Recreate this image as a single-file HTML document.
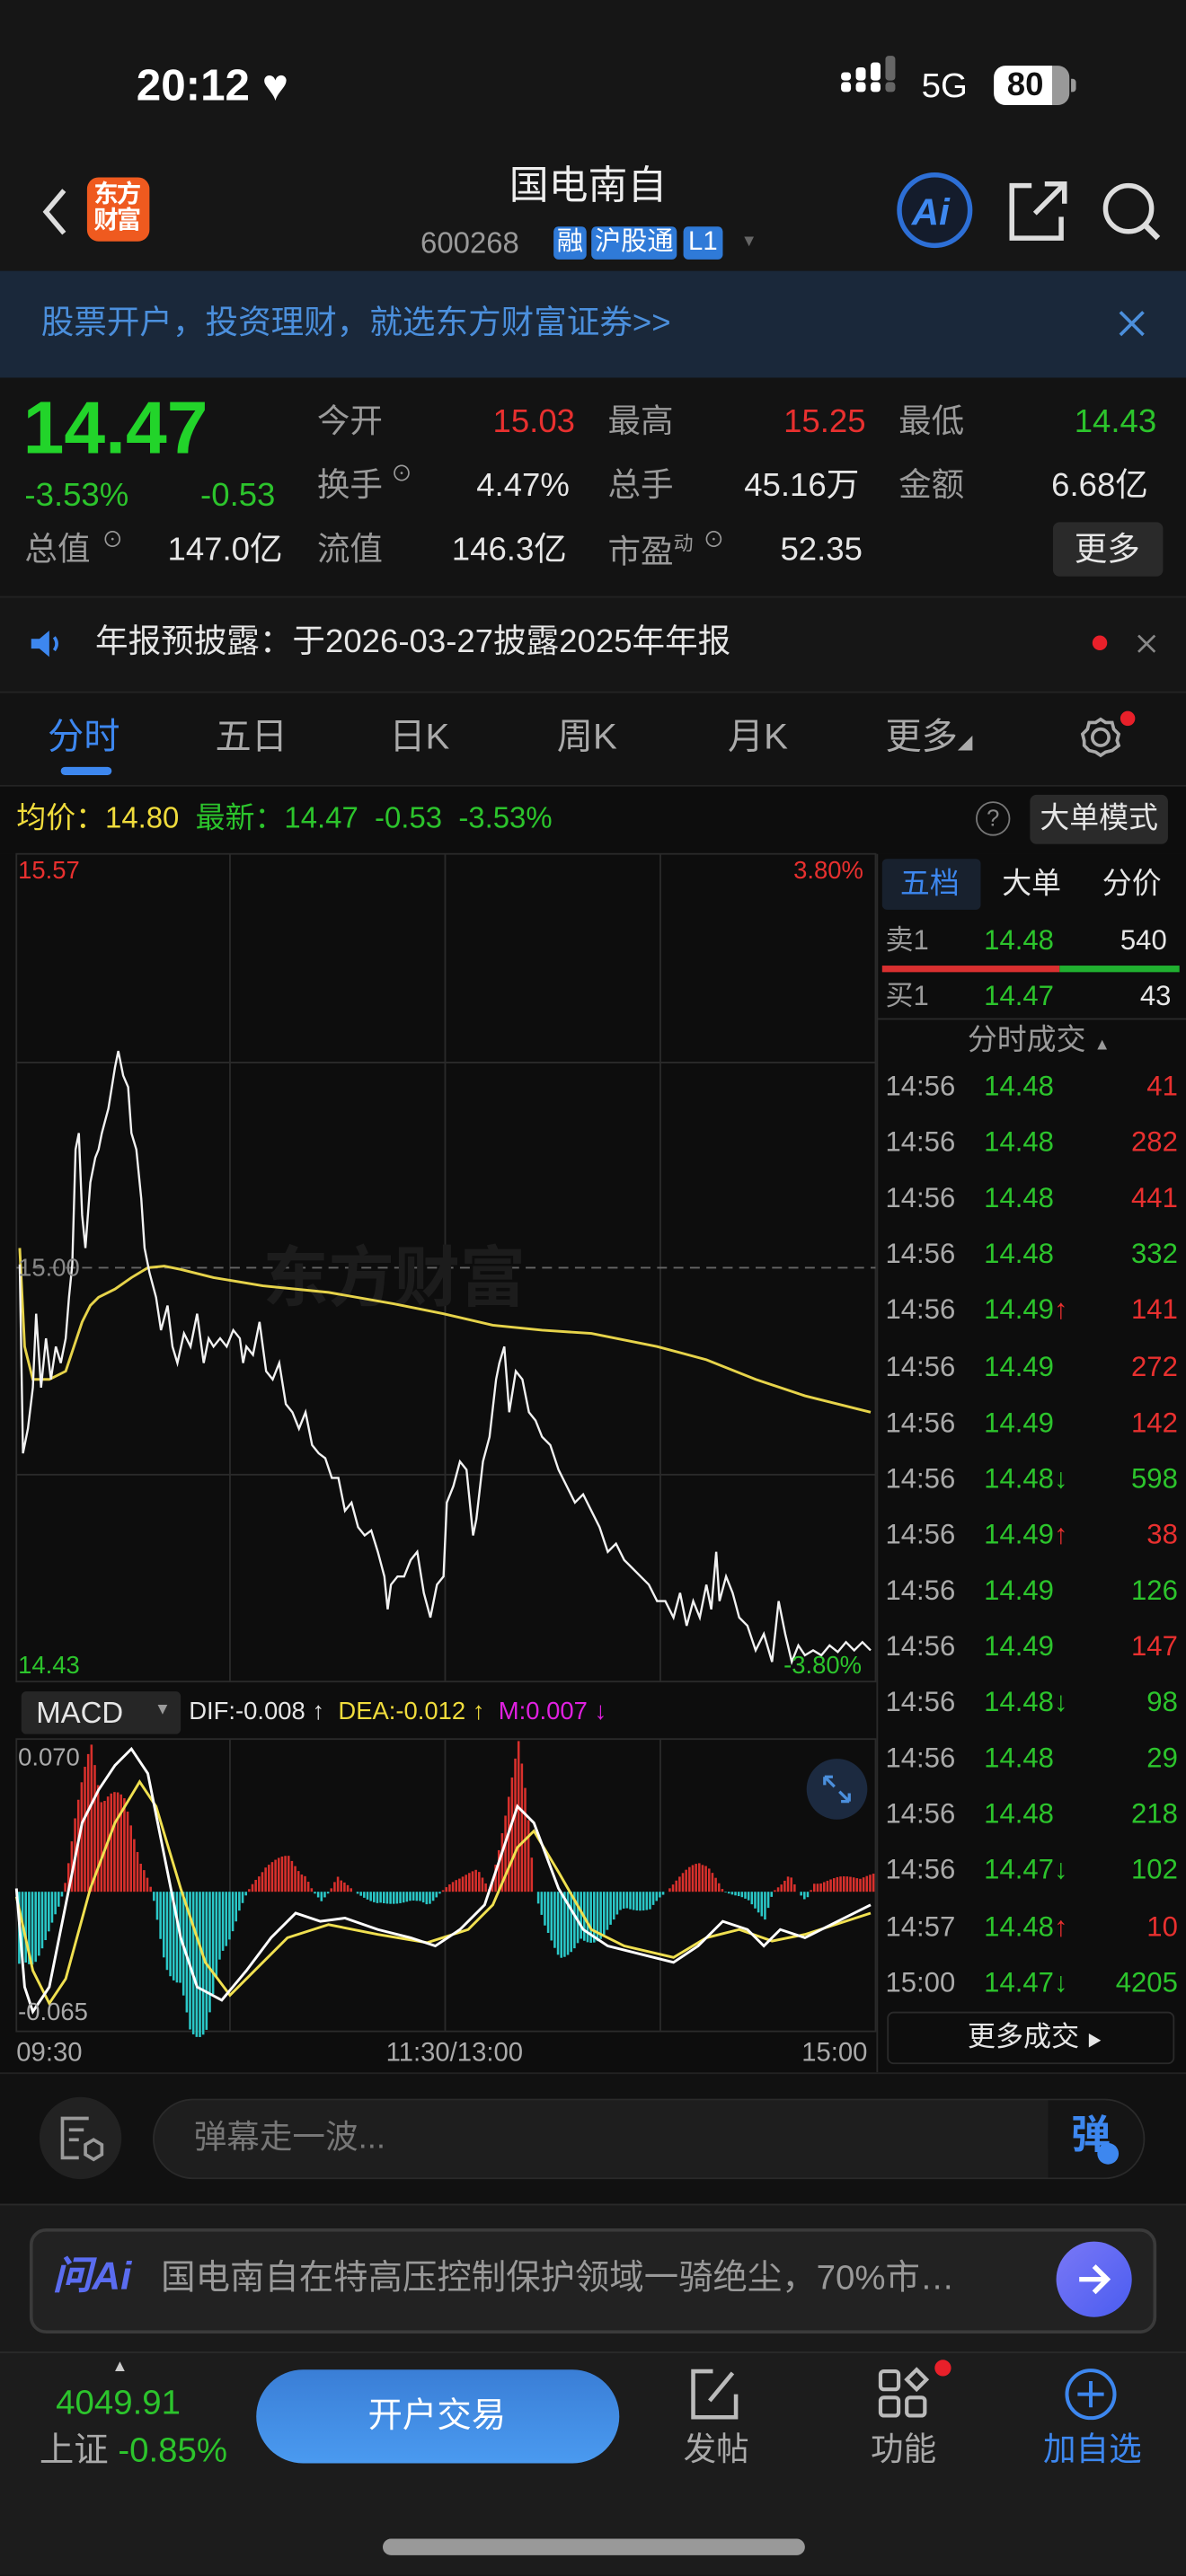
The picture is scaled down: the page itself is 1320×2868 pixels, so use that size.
<!DOCTYPE html>
<html><head><meta charset="utf-8">
<style>
*{margin:0;padding:0;box-sizing:border-box}
html,body{width:1320px;height:2868px;background:#161616;overflow:hidden}
#w{position:absolute;left:0;top:0;width:722px;height:1568px;transform:scale(1.8283);transform-origin:0 0;background:#161616;font-family:"Liberation Sans","Noto Sans CJK SC",sans-serif;color:#ddd}
.a{position:absolute;white-space:nowrap;line-height:1}
.g{color:#2cc42c}.r{color:#e8302f}.y{color:#f0dc3c}.gr{color:#9a9a9a}.w{color:#e6e6e6}
.b{position:absolute}
</style></head><body><div id="w">
<!-- status -->
<div class="a" style="left:83px;top:39px;font-size:27px;font-weight:bold;color:#fff">20:12 ♥</div>
<div class="b" style="left:512px;top:50px;width:6px;height:6px;background:#fff;border-radius:2px"></div>
<div class="b" style="left:521px;top:50px;width:6px;height:6px;background:#fff;border-radius:2px"></div>
<div class="b" style="left:530px;top:50px;width:6px;height:6px;background:#fff;border-radius:2px"></div>
<div class="b" style="left:539px;top:50px;width:6px;height:6px;background:#666;border-radius:2px"></div>
<div class="b" style="left:512px;top:44px;width:6px;height:5px;background:#fff;border-radius:2px"></div>
<div class="b" style="left:521px;top:41px;width:6px;height:8px;background:#fff;border-radius:2px"></div>
<div class="b" style="left:530px;top:38px;width:6px;height:11px;background:#fff;border-radius:2px"></div>
<div class="b" style="left:539px;top:34px;width:6px;height:15px;background:#666;border-radius:2px"></div>
<div class="a" style="left:561px;top:42px;font-size:21px;color:#fff">5G</div>
<div class="b" style="left:605px;top:40px;width:85px;height:0"></div>
<div class="b" style="left:605px;top:40px;width:85px;height:0"></div>
<div class="b" style="left:605px;top:40px;width:85px;height:0"></div>
<div class="b" style="left:605px;top:40px;width:85px;height:0"></div>
<div class="b" style="left:605px;top:40px;width:0;height:0"></div>
<div class="b" style="left:605px;top:40px;width:46px;height:24px;border-radius:7px;background:linear-gradient(90deg,#fff 0,#fff 77%,#999 77%)"></div>
<div class="b" style="left:652px;top:48px;width:3px;height:8px;background:#999;border-radius:0 2px 2px 0"></div>
<div class="a" style="left:613px;top:42px;font-size:20px;font-weight:bold;color:#111">80</div>
<!-- nav -->
<svg class="b" style="left:22px;top:113px" width="22" height="32"><path d="M17 3 L6 16 L17 29" stroke="#ddd" stroke-width="3" fill="none"/></svg>
<div class="b" style="left:53px;top:108px;width:38px;height:39px;background:#ef5a1f;border-radius:7px"></div>
<div class="a" style="left:57px;top:111px;font-size:15px;font-weight:bold;color:#fff;line-height:16px;letter-spacing:-1px">东方<br>财富</div>
<div class="a" style="left:310px;top:102px;font-size:24px;color:#eee">国电南自</div>
<div class="a gr" style="left:256px;top:139px;font-size:18px">600268</div>
<div class="a" style="left:337px;top:138px;font-size:16px;background:#2f7ad8;color:#fff;padding:2px 2px;border-radius:3px">融</div>
<div class="a" style="left:360px;top:138px;font-size:16px;background:#2f7ad8;color:#fff;padding:2px 2px;border-radius:3px">沪股通</div>
<div class="a" style="left:416px;top:138px;font-size:16px;background:#2f7ad8;color:#fff;padding:2px 3px;border-radius:3px">L1</div>
<div class="a" style="left:451px;top:143px;font-size:10px;color:#666">▼</div>
<svg class="b" style="left:545px;top:104px" width="50" height="50"><circle cx="24" cy="24" r="21.5" fill="#141c2c" stroke="#2d6fd6" stroke-width="3"/><text x="10" y="33" font-family="Liberation Sans" font-weight="bold" font-style="italic" font-size="23" fill="#3d87ef">Ai</text></svg>
<svg class="b" style="left:612px;top:108px" width="42" height="42"><path d="M16 5 H4 V37 H34 V24" stroke="#ddd" stroke-width="3" fill="none"/><path d="M18 22 L35 5 M24 4 H36 V16" stroke="#ddd" stroke-width="3" fill="none"/></svg>
<svg class="b" style="left:668px;top:108px" width="42" height="42"><circle cx="19" cy="19" r="14" stroke="#ddd" stroke-width="3" fill="none"/><path d="M29 29 L37 37" stroke="#ddd" stroke-width="3.5"/></svg>
<!-- banner -->
<div class="b" style="left:0;top:165px;width:722px;height:65px;background:#1a283a"></div>
<div class="a" style="left:25px;top:187px;font-size:20px;color:#4b8fdc">股票开户，投资理财，就选东方财富证券&gt;&gt;</div>
<svg class="b" style="left:679px;top:187px" width="20" height="20"><path d="M3 3 L17 17 M17 3 L3 17" stroke="#4b8fdc" stroke-width="2"/></svg>
<!-- quote -->
<div class="b" style="left:0;top:230px;width:722px;height:133px;background:#131313"></div>
<div class="a g" style="left:14px;top:238px;font-size:45px;font-weight:bold;color:#22d42a">14.47</div>
<div class="a g" style="left:15px;top:292px;font-size:20px">-3.53%</div>
<div class="a g" style="left:122px;top:292px;font-size:20px">-0.53</div>
<div class="a gr" style="left:15px;top:325px;font-size:20px">总值</div>
<div class="a gr" style="left:62px;top:322px;font-size:13px">⊙</div>
<div class="a w" style="left:102px;top:325px;font-size:20px">147.0亿</div>
<div class="a gr" style="left:193px;top:247px;font-size:20px">今开</div>
<div class="a r" style="left:300px;top:247px;font-size:20px">15.03</div>
<div class="a gr" style="left:370px;top:247px;font-size:20px">最高</div>
<div class="a r" style="left:477px;top:247px;font-size:20px">15.25</div>
<div class="a gr" style="left:547px;top:247px;font-size:20px">最低</div>
<div class="a g" style="left:654px;top:247px;font-size:20px">14.43</div>
<div class="a gr" style="left:193px;top:286px;font-size:20px">换手</div>
<div class="a gr" style="left:238px;top:282px;font-size:13px">⊙</div>
<div class="a w" style="left:290px;top:286px;font-size:20px">4.47%</div>
<div class="a gr" style="left:370px;top:286px;font-size:20px">总手</div>
<div class="a w" style="left:453px;top:286px;font-size:20px">45.16万</div>
<div class="a gr" style="left:547px;top:286px;font-size:20px">金额</div>
<div class="a w" style="left:640px;top:286px;font-size:20px">6.68亿</div>
<div class="a gr" style="left:193px;top:325px;font-size:20px">流值</div>
<div class="a w" style="left:275px;top:325px;font-size:20px">146.3亿</div>
<div class="a gr" style="left:370px;top:325px;font-size:20px">市盈<sup style="font-size:12px">动</sup></div>
<div class="a gr" style="left:428px;top:322px;font-size:13px">⊙</div>
<div class="a w" style="left:475px;top:325px;font-size:20px">52.35</div>
<div class="b" style="left:641px;top:318px;width:67px;height:33px;background:#2a2a2a;border-radius:4px"></div>
<div class="a w" style="left:654px;top:325px;font-size:20px">更多</div>
<!-- notice -->
<div class="b" style="left:0;top:363px;width:722px;height:58px;background:#161616;border-top:1px solid #222"></div>
<svg class="b" style="left:17px;top:382px" width="24" height="20"><path d="M2 7 H7 L13 2 V18 L7 13 H2 Z" fill="#3d87ef"/><path d="M16 6 Q19 10 16 14" stroke="#3d87ef" stroke-width="2" fill="none"/></svg>
<div class="a w" style="left:58px;top:381px;font-size:20px">年报预披露：于2026-03-27披露2025年年报</div>
<div class="b" style="left:665px;top:387px;width:9px;height:9px;border-radius:50%;background:#e8202a"></div>
<svg class="b" style="left:691px;top:385px" width="14" height="14"><path d="M2 2 L12 12 M12 2 L2 12" stroke="#888" stroke-width="1.5"/></svg>
<!-- tabs -->
<div class="b" style="left:0;top:421px;width:722px;height:58px;background:#131313;border-top:1px solid #242424;border-bottom:1px solid #242424"></div>
<div class="a" style="left:29px;top:438px;font-size:22px;color:#3d87ef">分时</div>
<div class="b" style="left:37px;top:467px;width:31px;height:5px;background:#3d87ef;border-radius:3px"></div>
<div class="a gr" style="left:131px;top:438px;font-size:22px;color:#aaa">五日</div>
<div class="a gr" style="left:237px;top:438px;font-size:22px;color:#aaa">日K</div>
<div class="a gr" style="left:339px;top:438px;font-size:22px;color:#aaa">周K</div>
<div class="a gr" style="left:443px;top:438px;font-size:22px;color:#aaa">月K</div>
<div class="a gr" style="left:539px;top:438px;font-size:22px;color:#aaa">更多<span style="font-size:9px">◢</span></div>
<svg class="b" style="left:656px;top:435px" width="30" height="30"><circle cx="14" cy="14" r="5" stroke="#aaa" stroke-width="2" fill="none"/><path d="M14 3 L17 5 L21 5 L22 9 L25 12 L24 16 L25 19 L21 22 L17 23 L14 25 L11 23 L7 22 L4 19 L4 16 L3 12 L6 9 L7 5 L11 5 Z" stroke="#aaa" stroke-width="2" fill="none"/></svg>
<div class="b" style="left:682px;top:433px;width:9px;height:9px;border-radius:50%;background:#e8202a"></div>
<!-- info line -->
<div class="b" style="left:0;top:479px;width:722px;height:41px;background:#0d0d0d"></div>
<div class="a" style="left:10px;top:489px;font-size:18px"><span class="y">均价：14.80</span>&nbsp; <span class="g">最新：14.47&nbsp; -0.53&nbsp; -3.53%</span></div>
<div class="b" style="left:594px;top:488px;width:21px;height:21px;border:1.5px solid #777;border-radius:50%;color:#888;font-size:14px;text-align:center;line-height:18px">?</div>
<div class="b" style="left:627px;top:484px;width:84px;height:30px;background:#2a2a2a;border-radius:4px"></div>
<div class="a w" style="left:633px;top:489px;font-size:18px">大单模式</div>
<!-- chart area -->
<div class="b" style="left:0;top:520px;width:722px;height:742px;background:#0d0d0d"></div>
<svg class="b" style="left:0;top:0" width="722" height="1262" id="ch">
<g stroke="#2a2a2a" stroke-width="1" fill="none">
<rect x="10" y="520" width="523" height="504"/>
<path d="M10 647 H533 M10 898 H533 M140 520 V1024 M271 520 V1024 M402 520 V1024"/>
<rect x="10" y="1059" width="523" height="178"/>
<path d="M140 1059 V1237 M271 1059 V1237 M402 1059 V1237"/>
<path d="M534 520 V1262"/>
</g>
<path d="M10 772 H533" stroke="#666" stroke-dasharray="6 4"/>
<text x="160" y="792" font-size="40" font-weight="bold" fill="#1c1c1c" font-family="Noto Sans CJK SC">东方财富</text>
<g id="hist"></g>
<polyline id="avg" fill="none" stroke="#e6d34a" stroke-width="1.6"/>
<polyline id="px" fill="none" stroke="#f2f2f2" stroke-width="1.3"/>
<polyline id="dea" fill="none" stroke="#f0e050" stroke-width="1.6"/>
<polyline id="dif" fill="none" stroke="#fff" stroke-width="1.6"/>
</svg>
<div class="a r" style="left:11px;top:523px;font-size:15px">15.57</div>
<div class="a r" style="left:483px;top:523px;font-size:15px">3.80%</div>
<div class="a" style="left:11px;top:765px;font-size:15px;color:#888">15.00</div>
<div class="a g" style="left:11px;top:1007px;font-size:15px">14.43</div>
<div class="a g" style="left:477px;top:1007px;font-size:15px">-3.80%</div>
<div class="b" style="left:13px;top:1030px;width:97px;height:26px;background:#262626;border-radius:3px"></div>
<div class="a w" style="left:22px;top:1034px;font-size:18px">MACD</div>
<div class="a gr" style="left:94px;top:1037px;font-size:10px">▼</div>
<div class="a" style="left:115px;top:1035px;font-size:15px"><span class="w">DIF:-0.008 ↑</span>&nbsp; <span class="y">DEA:-0.012 ↑</span>&nbsp; <span style="color:#e020e0">M:0.007 ↓</span></div>
<div class="a" style="left:11px;top:1063px;font-size:15px;color:#aaa">0.070</div>
<div class="a" style="left:11px;top:1218px;font-size:15px;color:#aaa">-0.065</div>
<div class="b" style="left:491px;top:1071px;width:37px;height:37px;border-radius:50%;background:#1c2a40"></div>
<svg class="b" style="left:498px;top:1078px" width="23" height="23"><path d="M4 4 L10 10 M4 4 V9 M4 4 H9 M19 19 L13 13 M19 19 V14 M19 19 H14" stroke="#4b8fdc" stroke-width="1.8" fill="none"/></svg>
<div class="a" style="left:10px;top:1243px;font-size:16px;color:#aaa">09:30</div>
<div class="a" style="left:235px;top:1243px;font-size:16px;color:#aaa">11:30/13:00</div>
<div class="a" style="left:488px;top:1243px;font-size:16px;color:#aaa">15:00</div>
<!-- right panel -->
<div class="b" style="left:537px;top:523px;width:60px;height:31px;background:#18212e;border-radius:3px"></div>
<div class="a" style="left:548px;top:529px;font-size:18px;color:#3d87ef">五档</div>
<div class="a w" style="left:610px;top:529px;font-size:18px">大单</div>
<div class="a w" style="left:671px;top:529px;font-size:18px">分价</div>
<div class="a gr" style="left:539px;top:564px;font-size:17px">卖1</div>
<div class="a g" style="left:599px;top:564px;font-size:17px">14.48</div>
<div class="a w" style="left:682px;top:564px;font-size:17px">540</div>
<div class="b" style="left:537px;top:588px;width:108px;height:4px;background:#d93030"></div>
<div class="b" style="left:645px;top:588px;width:73px;height:4px;background:#20b030"></div>
<div class="a gr" style="left:539px;top:598px;font-size:17px">买1</div>
<div class="a g" style="left:599px;top:598px;font-size:17px">14.47</div>
<div class="a w" style="left:694px;top:598px;font-size:17px">43</div>
<div class="b" style="left:534px;top:620px;width:188px;height:1px;background:#2a2a2a"></div>
<div class="a gr" style="left:589px;top:624px;font-size:18px">分时成交 <span style="font-size:10px">▲</span></div>
<div id="rows"></div>
<div class="b" style="left:540px;top:1225px;width:175px;height:32px;border:1px solid #2a2a2a;border-radius:4px"></div>
<div class="a w" style="left:589px;top:1232px;font-size:17px">更多成交 <span style="font-size:9px">▶</span></div>
<!-- danmu -->
<div class="b" style="left:0;top:1262px;width:722px;height:80px;background:#111;border-top:1px solid #222"></div>
<div class="b" style="left:24px;top:1277px;width:50px;height:50px;border-radius:50%;background:#222"></div>
<svg class="b" style="left:34px;top:1287px" width="32" height="32"><path d="M20 3 H4 V27 H14" stroke="#999" stroke-width="2" fill="none"/><path d="M8 10 H17 M8 16 H14" stroke="#999" stroke-width="2"/><path d="M23 16 L28 19 V25 L23 28 L18 25 V19 Z" stroke="#999" stroke-width="2" fill="none"/></svg>
<div class="b" style="left:93px;top:1278px;width:604px;height:49px;border-radius:25px;background:#1e1e1e;border:1px solid #2a2a2a"></div>
<div class="b" style="left:638px;top:1279px;width:58px;height:47px;border-radius:0 24px 24px 0;background:#151515"></div>
<div class="a" style="left:118px;top:1292px;font-size:20px;color:#777">弹幕走一波...</div>
<div class="a" style="left:652px;top:1289px;font-size:24px;font-weight:bold;color:#3d87ef">弹</div>
<div class="b" style="left:668px;top:1305px;width:13px;height:13px;border-radius:50%;background:#3d87ef"></div>
<!-- AI -->
<div class="b" style="left:0;top:1342px;width:722px;height:90px;background:#1a1a1a;border-top:1px solid #2a2a2a"></div>
<div class="b" style="left:18px;top:1357px;width:686px;height:64px;border-radius:10px;background:#222;border:2px solid #3a3a3a"></div>
<div class="a" style="left:32px;top:1375px;font-size:24px;font-weight:bold;font-style:italic;color:#5a6cf0">问Ai</div>
<div class="a" style="left:98px;top:1377px;font-size:21px;color:#999">国电南自在特高压控制保护领域一骑绝尘，70%市…</div>
<div class="b" style="left:643px;top:1365px;width:46px;height:46px;border-radius:50%;background:linear-gradient(135deg,#7a78f6,#4a5cf0)"></div>
<svg class="b" style="left:653px;top:1375px" width="26" height="26"><path d="M4 13 H21 M13 5 L21 13 L13 21" stroke="#fff" stroke-width="3" fill="none"/></svg>
<!-- bottom nav -->
<div class="b" style="left:0;top:1432px;width:722px;height:136px;background:#1c1c1c;border-top:1px solid #2a2a2a"></div>
<div class="a" style="left:68px;top:1437px;font-size:10px;color:#ccc">▲</div>
<div class="a g" style="left:34px;top:1453px;font-size:21px">4049.91</div>
<div class="a" style="left:24px;top:1482px;font-size:21px"><span style="color:#aaa">上证</span> <span class="g">-0.85%</span></div>
<div class="b" style="left:156px;top:1443px;width:221px;height:57px;border-radius:29px;background:linear-gradient(180deg,#3a7ed6,#4a9af0)"></div>
<div class="a" style="left:224px;top:1461px;font-size:21px;color:#fff">开户交易</div>
<svg class="b" style="left:418px;top:1440px" width="34" height="36"><path d="M16 4 H4 V32 H30 V18" stroke="#bbb" stroke-width="2.5" fill="none"/><path d="M14 22 L28 5" stroke="#bbb" stroke-width="2.5"/></svg>
<div class="a" style="left:416px;top:1482px;font-size:20px;color:#aaa">发帖</div>
<svg class="b" style="left:533px;top:1441px" width="36" height="36"><rect x="3" y="3" width="11" height="11" rx="2" stroke="#bbb" stroke-width="2.3" fill="none"/><rect x="3" y="19" width="11" height="11" rx="2" stroke="#bbb" stroke-width="2.3" fill="none"/><rect x="19" y="19" width="11" height="11" rx="2" stroke="#bbb" stroke-width="2.3" fill="none"/><path d="M25 2 L31 8 L25 14 L19 8 Z" stroke="#bbb" stroke-width="2.3" fill="none"/></svg>
<div class="b" style="left:569px;top:1437px;width:10px;height:10px;border-radius:50%;background:#e8202a"></div>
<div class="a" style="left:530px;top:1482px;font-size:20px;color:#aaa">功能</div>
<svg class="b" style="left:647px;top:1441px" width="34" height="34"><circle cx="17" cy="17" r="14.5" stroke="#3d87ef" stroke-width="2.2" fill="none"/><path d="M17 9 V25 M9 17 H25" stroke="#3d87ef" stroke-width="2.2"/></svg>
<div class="a" style="left:635px;top:1482px;font-size:20px;color:#3d87ef">加自选</div>
<div class="b" style="left:233px;top:1546px;width:257px;height:10px;border-radius:5px;background:#999"></div>
</div>
<script>
var NS="http://www.w3.org/2000/svg";
function pl(id,a){document.getElementById(id).setAttribute("points",a.map(function(p){return p.join(",")}).join(" "));}
pl("px",[[12,770],[14,885],[17,870],[20,845],[22,800],[25,845],[28,815],[31,840],[34,820],[37,830],[40,815],[42,790],[44,770],[46,700],[48,690],[50,740],[52,760],[55,720],[58,705],[60,700],[62,690],[66,675],[70,650],[72,640],[75,655],[78,662],[80,690],[83,700],[86,730],[88,760],[91,775],[95,790],[98,810],[102,795],[105,820],[108,830],[112,812],[116,820],[120,800],[124,830],[127,815],[130,820],[134,815],[138,820],[142,810],[146,815],[148,830],[150,820],[154,825],[158,805],[162,835],[166,840],[170,830],[174,855],[178,860],[182,870],[186,860],[190,880],[194,885],[198,888],[202,900],[206,900],[210,920],[214,915],[218,930],[222,935],[226,932],[230,945],[234,960],[236,980],[238,965],[242,960],[246,960],[250,950],[254,945],[258,970],[262,985],[266,965],[270,960],[272,915],[276,905],[280,890],[284,895],[288,935],[290,925],[294,890],[298,875],[302,840],[304,830],[307,820],[310,860],[314,835],[318,840],[322,860],[326,865],[330,875],[335,880],[340,895],[345,905],[350,915],[355,910],[360,920],[365,930],[370,945],[375,940],[380,950],[385,955],[390,960],[395,965],[400,975],[405,975],[410,985],[414,970],[418,990],[422,975],[426,985],[430,965],[433,980],[436,945],[438,975],[442,960],[446,970],[450,985],[455,990],[460,1005],[465,995],[470,1012],[474,975],[478,995],[482,1012],[486,1002],[490,1008],[495,1005],[500,1008],[505,1002],[510,1006],[515,1000],[520,1005],[525,1000],[530,1005]]);
pl("avg",[[12,760],[15,820],[20,840],[30,840],[40,835],[45,820],[50,805],[55,795],[60,790],[70,785],[80,778],[90,772],[100,771],[110,773],[130,778],[160,783],[200,787],[240,794],[270,800],[300,807],[330,810],[360,812],[400,820],[430,828],[460,840],[490,850],[510,855],[530,860]]);
pl("dif",[[10,1150],[15,1210],[20,1225],[30,1210],[40,1160],[50,1110],[60,1090],[70,1075],[80,1065],[90,1080],[100,1130],[110,1180],[120,1210],[135,1218],[150,1200],[165,1180],[180,1165],[195,1170],[210,1168],[230,1175],[250,1180],[265,1185],[280,1175],[295,1160],[305,1130],[315,1100],[325,1110],[340,1150],[355,1175],[370,1185],[390,1190],[410,1195],[425,1185],[440,1170],[455,1175],[465,1185],[475,1175],[490,1180],[510,1170],[530,1160]]);
pl("dea",[[10,1155],[20,1200],[30,1220],[40,1205],[55,1150],[70,1110],[85,1085],[95,1100],[110,1150],[125,1195],[140,1215],[155,1200],[175,1180],[200,1172],[230,1178],[260,1183],[285,1175],[300,1160],[315,1125],[325,1115],[340,1140],[360,1175],[380,1185],[410,1192],[430,1180],[450,1175],[470,1182],[490,1178],[530,1165]]);
var k=[[10,-50],[20,-40],[35,-10],[38,0],[45,40],[55,85],[62,60],[75,50],[85,20],[92,0],[100,-40],[115,-80],[125,-75],[135,-40],[145,-10],[150,0],[160,15],[175,20],[185,10],[190,0],[195,-5],[200,0],[205,10],[215,0],[230,-8],[250,-5],[260,-8],[268,0],[280,10],[290,12],[298,0],[305,40],[315,80],[320,50],[325,0],[330,-20],[340,-35],[350,-35],[365,-25],[380,-10],[395,-10],[405,0],[415,10],[425,20],[430,15],[440,0],[455,-5],[465,-15],[470,0],[480,10],[485,0],[490,-5],[495,5],[510,8],[532,10]];
function f(x){for(var i=0;i<k.length-1;i++){if(x>=k[i][0]&&x<=k[i+1][0]){var t=(x-k[i][0])/(k[i+1][0]-k[i][0]);return k[i][1]+t*(k[i+1][1]-k[i][1]);}}return 0;}
var h=document.getElementById("hist"),z=1152;
for(var x=11;x<532;x+=2){var v=f(x)*(0.85+0.3*Math.abs(Math.sin(x*1.7)));var r=document.createElementNS(NS,"rect");r.setAttribute("x",x);r.setAttribute("width",1.4);if(v>0){r.setAttribute("y",z-v);r.setAttribute("height",v);r.setAttribute("fill","#d8302c");}else{r.setAttribute("y",z);r.setAttribute("height",-v);r.setAttribute("fill","#2ac8c8");}h.appendChild(r);}
var rows=[["14:56","14.48","","41","r"],["14:56","14.48","","282","r"],["14:56","14.48","","441","r"],["14:56","14.48","","332","g"],["14:56","14.49","↑","141","r"],["14:56","14.49","","272","r"],["14:56","14.49","","142","r"],["14:56","14.48","↓","598","g"],["14:56","14.49","↑","38","r"],["14:56","14.49","","126","g"],["14:56","14.49","","147","r"],["14:56","14.48","↓","98","g"],["14:56","14.48","","29","g"],["14:56","14.48","","218","g"],["14:56","14.47","↓","102","g"],["14:57","14.48","↑","10","r"],["15:00","14.47","↓","4205","g"]];
var s="";rows.forEach(function(q,i){var y=653+i*34.1;s+='<div class="a" style="left:539px;top:'+y+'px;font-size:17px;color:#aaa">'+q[0]+'</div><div class="a g" style="left:599px;top:'+y+'px;font-size:17px">'+q[1]+'<span class="'+(q[2]=="↑"?"r":"g")+'">'+q[2]+'</span></div><div class="a '+q[4]+'" style="right:5px;top:'+y+'px;font-size:17px">'+q[3]+'</div>';});
document.getElementById("rows").innerHTML=s;
</script>
</body></html>
